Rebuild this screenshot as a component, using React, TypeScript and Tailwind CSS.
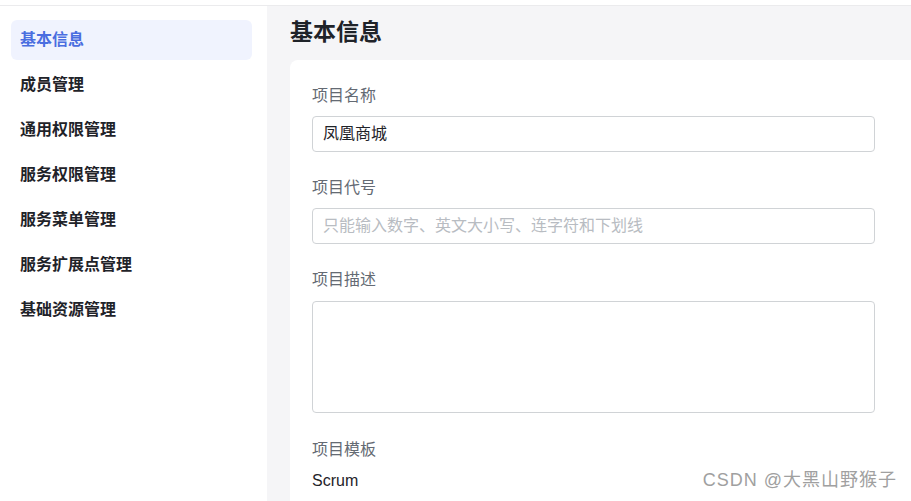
import React from "react";

const menu = ["基本信息", "成员管理", "通用权限管理", "服务权限管理", "服务菜单管理", "服务扩展点管理", "基础资源管理"];

const font = { fontFamily: '"Liberation Sans", "Noto Sans CJK SC", sans-serif' };

export default function App() {
  return (
    <div className="relative w-[911px] h-[501px] overflow-hidden bg-white" style={font}>
      <div className="h-[6px] border-b border-[#ebebed] bg-white" />
      <div className="flex h-[495px]">
        <aside className="w-[267px] shrink-0 bg-white pl-[11px] pr-[15px] pt-[14px] flex flex-col gap-[5px]">
          {menu.map((m, i) => (
            <div
              key={m}
              className={`h-[40px] flex items-center pl-[9px] pb-[1px] rounded-[6px] text-[16px] font-bold ${
                i === 0 ? "bg-[#f0f3fe] text-[#4a6ee0]" : "text-[#1f2329]"
              }`}
            >
              {m}
            </div>
          ))}
        </aside>
        <main className="flex-1 bg-[#f5f5f7] pl-[23px] flex flex-col">
          <h1 className="h-[54px] flex items-center text-[23px] font-bold text-[#1f2329] pb-[2px]">基本信息</h1>
          <div className="flex-1 bg-white rounded-tl-[8px] pl-[22px] pt-[25px]">
            <div className="w-[563px] flex flex-col">
              <label className="h-[22px] leading-[22px] text-[16px] text-[#646a73]">项目名称</label>
              <div className="mt-[9px] h-[36px] border border-[#d0d3d6] rounded-[4px] flex items-center px-[10px] text-[16px] text-[#1f2329]">
                凤凰商城
              </div>
              <label className="mt-[25px] h-[22px] leading-[22px] text-[16px] text-[#646a73]">项目代号</label>
              <div className="mt-[9px] h-[36px] border border-[#d0d3d6] rounded-[4px] flex items-center px-[10px] text-[16px] text-[#b8bcc2]">
                只能输入数字、英文大小写、连字符和下划线
              </div>
              <label className="mt-[25px] h-[22px] leading-[22px] text-[16px] text-[#646a73]">项目描述</label>
              <div className="mt-[10px] h-[112px] border border-[#d0d3d6] rounded-[4px]" />
              <label className="mt-[26px] h-[22px] leading-[22px] text-[16px] text-[#646a73]">项目模板</label>
              <div className="mt-[9px] h-[22px] leading-[22px] text-[16px] text-[#1f2329]">Scrum</div>
            </div>
          </div>
        </main>
      </div>
      <div className="absolute right-[14px] bottom-[7px] text-[18px] text-[#a0a0a0] tracking-[1px]">
        CSDN @大黑山野猴子
      </div>
    </div>
  );
}
